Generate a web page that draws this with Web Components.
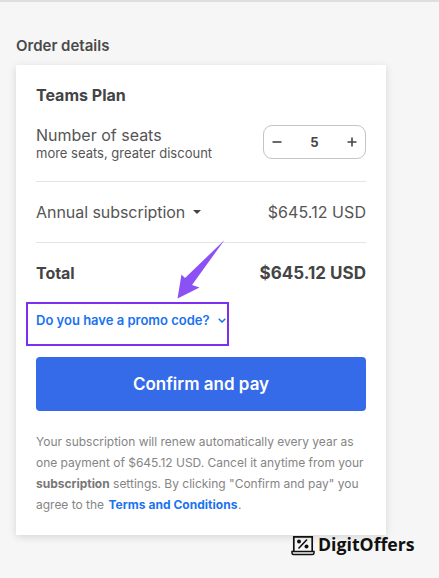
<!DOCTYPE html>
<html lang="en">
<head>
<meta charset="utf-8">
<title>Order details</title>
<style>
html, body { margin: 0; height: 100%; }
body {
    background: #f6f6f6;
    font-family: Inter, "Liberation Sans", sans-serif;
    color: #444;
    overflow: hidden;
}
</style>
</head>
<body>
<order-page>
    <order-card>
        <plan-title>Teams Plan</plan-title>
        <seat-row seats="5"></seat-row>
        <price-row label="Annual subscription" price="$645.12 USD" caret></price-row>
        <price-row label="Total" price="$645.12 USD" total></price-row>
        <promo-link>Do you have a promo code?</promo-link>
        <pay-button>Confirm and pay</pay-button>
        <legal-note>Your subscription will renew automatically every year as one payment of $645.12 USD. Cancel it anytime from your <b>subscription</b> settings. By clicking "Confirm and pay" you agree to the <a>Terms and Conditions</a>.</legal-note>
    </order-card>
    <promo-callout></promo-callout>
    <digit-badge></digit-badge>
</order-page>

<script>
class OrderPage extends HTMLElement {
    constructor() {
        super();
        this.attachShadow({ mode: 'open' });
        this.shadowRoot.innerHTML = `
            <style>
                :host {
                    display: block;
                    position: relative;
                    height: 578px;
                    box-sizing: border-box;
                    border-top: 2px solid #dedede;
                    padding: 35px 53px 0 16px;
                }
                h2 {
                    margin: 0 0 10px;
                    font-size: 15px;
                    line-height: 18px;
                    font-weight: 600;
                    color: #4a4a4a;
                }
            </style>
            <h2>Order details</h2>
            <slot></slot>
        `;
    }
}

class OrderCard extends HTMLElement {
    constructor() {
        super();
        this.attachShadow({ mode: 'open' });
        this.shadowRoot.innerHTML = `
            <style>
                :host {
                    display: block;
                    box-sizing: border-box;
                    height: 470px;
                    padding: 20px;
                    background: #fff;
                    box-shadow: 0 2px 8px rgba(0,0,0,0.13);
                }
            </style>
            <slot></slot>
        `;
    }
}

class PlanTitle extends HTMLElement {
    constructor() {
        super();
        this.attachShadow({ mode: 'open' });
        this.shadowRoot.innerHTML = `
            <style>
                :host {
                    display: block;
                    font-size: 16px;
                    line-height: 20px;
                    font-weight: 700;
                    color: #444;
                }
            </style>
            <slot></slot>
        `;
    }
}

class SeatRow extends HTMLElement {
    constructor() {
        super();
        this.attachShadow({ mode: 'open' });
        const seats = this.getAttribute('seats') || '1';
        this.shadowRoot.innerHTML = `
            <style>
                :host {
                    display: flex;
                    justify-content: space-between;
                    align-items: flex-start;
                    height: 56px;
                    margin-top: 20px;
                    border-bottom: 1px solid #e4e4e4;
                }
                .name { font-size: 16px; line-height: 20px; color: #555; }
                .hint { font-size: 13px; line-height: 16px; color: #555; }
                .stepper {
                    display: flex;
                    align-items: center;
                    justify-content: space-between;
                    box-sizing: border-box;
                    width: 103px;
                    height: 34px;
                    padding: 0 8px;
                    border: 1px solid #c4c4c4;
                    border-radius: 9px;
                    font-size: 13px;
                    font-weight: 700;
                    color: #444;
                }
                svg { display: block; }
            </style>
            <div>
                <div class="name">Number of seats</div>
                <div class="hint">more seats, greater discount</div>
            </div>
            <div class="stepper">
                <svg width="10" height="10" viewBox="0 0 10 10"><path d="M0.500 5h9" stroke="#444" stroke-width="1.600"/></svg>
                <span>${seats}</span>
                <svg width="10" height="10" viewBox="0 0 10 10"><path d="M0.500 5h9M5 0.500v9" stroke="#444" stroke-width="1.600"/></svg>
            </div>
        `;
    }
}

class PriceRow extends HTMLElement {
    constructor() {
        super();
        this.attachShadow({ mode: 'open' });
        const caret = this.hasAttribute('caret')
            ? '<svg width="8" height="4" viewBox="0 0 8 4"><path d="M0 0h8L4 4z" fill="#444"/></svg>'
            : '';
        this.shadowRoot.innerHTML = `
            <style>
                :host {
                    display: flex;
                    justify-content: space-between;
                    align-items: center;
                    height: 60px;
                    font-size: 16px;
                    color: #555;
                    border-bottom: 1px solid #e4e4e4;
                }
                :host([total]) {
                    border-bottom: 0;
                    font-weight: 700;
                    color: #444;
                }
                :host([total]) .price { font-size: 17px; letter-spacing: 0.02px; }
                .label { display: flex; align-items: center; gap: 8px; letter-spacing: -0.05px; }
                .price { letter-spacing: 0.06px; }
            </style>
            <div class="label">${this.getAttribute('label')}${caret}</div>
            <div class="price">${this.getAttribute('price')}</div>
        `;
    }
}

class PromoLink extends HTMLElement {
    constructor() {
        super();
        this.attachShadow({ mode: 'open' });
        this.shadowRoot.innerHTML = `
            <style>
                :host {
                    display: flex;
                    align-items: center;
                    gap: 8px;
                    margin-top: 8px;
                    height: 18px;
                    font-size: 13px;
                    font-weight: 600;
                    color: #1a73f0;
                }
            </style>
            <slot></slot>
            <svg width="8" height="5" viewBox="0 0 8 5"><path d="M0.700 0.700L4 4l3.300-3.300" fill="none" stroke="#1a73f0" stroke-width="1.500"/></svg>
        `;
    }
}

class PayButton extends HTMLElement {
    constructor() {
        super();
        this.attachShadow({ mode: 'open' });
        this.shadowRoot.innerHTML = `
            <style>
                :host {
                    display: flex;
                    align-items: center;
                    justify-content: center;
                    height: 54px;
                    margin-top: 28px;
                    background: #356ae9;
                    border-radius: 4px;
                    color: #fff;
                    font-size: 17px;
                    font-weight: 600;
                }
            </style>
            <slot></slot>
        `;
    }
}

class LegalNote extends HTMLElement {
    constructor() {
        super();
        this.attachShadow({ mode: 'open' });
        this.shadowRoot.innerHTML = `
            <style>
                :host {
                    display: block;
                    margin-top: 20px;
                    font-size: 12px;
                    line-height: 21px;
                    letter-spacing: -0.01px;
                    color: #858585;
                }
                ::slotted(b) { font-weight: 700; color: #777; }
                ::slotted(a) { font-weight: 700; letter-spacing: 0.04px; margin: 0 0.5px 0 1px; color: #1a73f0; }
            </style>
            <slot></slot>
        `;
    }
}

// box and arrow drawn over the card
class PromoCallout extends HTMLElement {
    constructor() {
        super();
        this.attachShadow({ mode: 'open' });
        this.shadowRoot.innerHTML = `
            <style>
                :host {
                    position: absolute;
                    left: 26px;
                    top: 236px;
                    width: 203px;
                    height: 108px;
                    pointer-events: none;
                }
                .box {
                    position: absolute;
                    left: 0;
                    top: 64px;
                    box-sizing: border-box;
                    width: 203px;
                    height: 44px;
                    border: 2px solid #7a2ff2;
                }
                svg { position: absolute; left: 0; top: 0; }
            </style>
            <svg width="203" height="64" viewBox="26 238 203 64">
                <path d="M224.500 240L192 285L199.500 287.500L177.500 298.500L181.500 274.500L185 278Z" fill="#8b51f5"/>
            </svg>
            <div class="box"></div>
        `;
    }
}

class DigitBadge extends HTMLElement {
    constructor() {
        super();
        this.attachShadow({ mode: 'open' });
        this.shadowRoot.innerHTML = `
            <style>
                :host {
                    position: absolute;
                    left: 291px;
                    top: 530px;
                    display: flex;
                    align-items: center;
                    gap: 3px;
                    font-family: "Open Sans", "Noto Sans", sans-serif;
                    font-size: 17.700px;
                    line-height: 24px;
                    font-weight: 700;
                    color: #111;
                }
                svg { display: block; margin-top: 2px; }
            </style>
            <svg width="24" height="21" viewBox="0 0 24 21">
                <path d="M2.800 16V1.800h18.400V16" fill="none" stroke="#111" stroke-width="1.700"/>
                <path d="M1 16.500h22v1.500q0 1.500-1.500 1.500h-19q-1.500 0-1.500-1.500z" fill="none" stroke="#111" stroke-width="1.500"/>
                <path d="M7.500 13.500L16 4.500" stroke="#111" stroke-width="1.600"/>
                <circle cx="8" cy="6.500" r="2" fill="#111"/>
                <circle cx="15.500" cy="11.500" r="2" fill="#111"/>
            </svg>
            <span>DigitOffers</span>
        `;
    }
}

customElements.define('order-page', OrderPage);
customElements.define('order-card', OrderCard);
customElements.define('plan-title', PlanTitle);
customElements.define('seat-row', SeatRow);
customElements.define('price-row', PriceRow);
customElements.define('promo-link', PromoLink);
customElements.define('pay-button', PayButton);
customElements.define('legal-note', LegalNote);
customElements.define('promo-callout', PromoCallout);
customElements.define('digit-badge', DigitBadge);
</script>
</body>
</html>
